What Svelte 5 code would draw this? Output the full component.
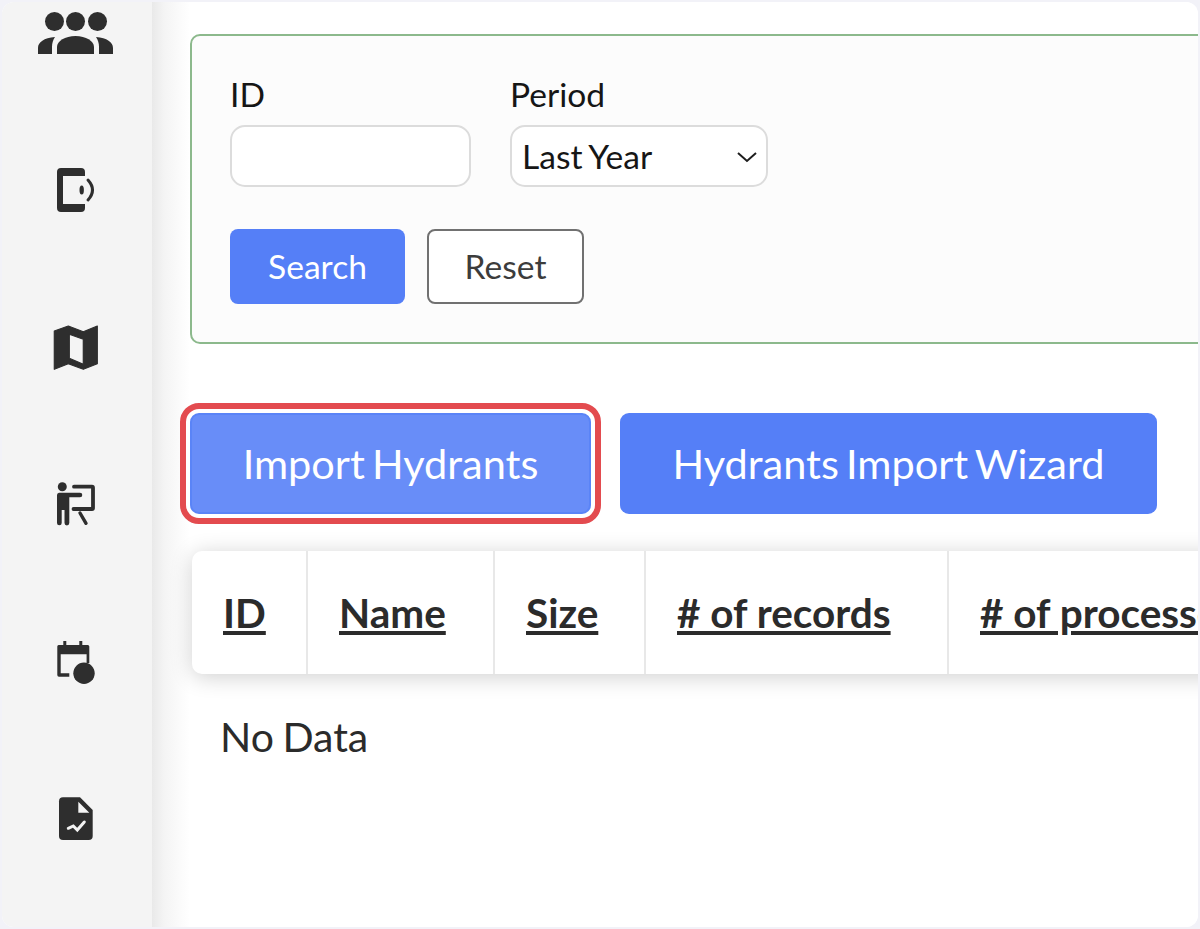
<script>
  const columns = [
    { label: 'ID', width: 115 },
    { label: 'Name', width: 187 },
    { label: 'Size', width: 151 },
    { label: '# of records', width: 303 },
    { label: '# of processed records', width: 461 }
  ];
</script>

<div class="frame">
  <aside class="sidebar">
    <svg viewBox="0 0 80 80" aria-hidden="true">
      <circle cx="18.5" cy="28.5" r="9.5" /><circle cx="39.5" cy="28.5" r="9.5" /><circle cx="61.5" cy="28.5" r="9.5" />
      <path d="M21 61v-7c0-6 8-11 18.5-11S58 48 58 54v7z" />
      <path d="M2 61v-6c0-6 6-10 17-11-2 3-3 6-3 10v7z" />
      <path d="M77 61v-6c0-6-6-10-17-11 2 3 3 6 3 10v7z" />
    </svg>
    <svg viewBox="0 0 80 80" aria-hidden="true">
      <path d="M25 18h20a4 4 0 0 1 4 4v4H27v28h22v4a4 4 0 0 1-4 4H25a4 4 0 0 1-4-4V22a4 4 0 0 1 4-4z" />
      <ellipse cx="45.7" cy="40" rx="2.200" ry="4.500" />
      <path class="line" d="M52 30q9 10 0 20" stroke-width="3" />
    </svg>
    <svg viewBox="0 0 80 80" aria-hidden="true">
      <path class="map" fill-rule="evenodd" d="M18.3 23 32.3 18 47.3 23.7 61.3 18V55.7L47.3 61.3 32.3 55.7 18.3 61.3zM33.3 26.3V50.3L47.3 56.3V31.3z" />
    </svg>
    <svg viewBox="0 0 80 80" aria-hidden="true">
      <circle cx="26.3" cy="21.7" r="4.5" />
      <path d="M23 27.7h21a2.3 2.3 0 0 1 0 4.6H33.3V58a2.3 2.3 0 0 1-4.8 0V45h-2.8v13a2.3 2.3 0 0 1-4.7 0V30a2.5 2.5 0 0 1 2-2.3z" />
      <path class="line" d="M38 21.7h18a1 1 0 0 1 1 1V43a1 1 0 0 1-1 1H37.5" stroke-width="3.8" />
      <path class="line" d="M44 48l6 10.3" stroke-width="3.4" />
    </svg>
    <svg viewBox="0 0 80 80" aria-hidden="true">
      <path d="M27.3 18h3v4h13v-4h3v4h5.5a1.5 1.5 0 0 1 1.5 1.5V40h-2.7V31.3H24.7v19h8.6v3.4H23a1.7 1.7 0 0 1-1.7-1.7V23.5A1.5 1.5 0 0 1 23 22h4.3z" />
      <circle cx="48" cy="50.3" r="10.7" />
    </svg>
    <svg viewBox="0 0 80 80" aria-hidden="true">
      <path d="M27 17.3h17L56.7 30v26a4 4 0 0 1-4 4H27a4 4 0 0 1-4-4V21.300a4 4 0 0 1 4-4z" />
      <path class="fold" d="M42.300 21.700 53.300 32.700H42.300z" />
      <path class="spark" d="M32.300 48.300 37.300 46 41.300 50 48.300 42" />
    </svg>
  </aside>

  <main class="content">
    <section class="filters">
      <div class="fields">
        <label class="field">
          <span>ID</span>
          <input class="control id-input" type="text" />
        </label>
        <label class="field">
          <span>Period</span>
          <span class="select-wrap">
            <select class="control period">
              <option>Last Year</option>
            </select>
            <svg class="chevron" viewBox="0 0 22 12" aria-hidden="true"><path d="M2 2l9 8 9-8" /></svg>
          </span>
        </label>
      </div>
      <div class="filter-actions">
        <button class="search" type="button">Search</button>
        <button class="reset" type="button">Reset</button>
      </div>
    </section>

    <div class="actions">
      <button class="big highlighted" type="button">Import Hydrants</button>
      <button class="big wizard" type="button">Hydrants Import Wizard</button>
    </div>

    <div class="table-card">
      <table>
        <colgroup>
          {#each columns as c}
            <col style="width: {c.width}px" />
          {/each}
        </colgroup>
        <thead>
          <tr>
            {#each columns as c}
              <th>{c.label}</th>
            {/each}
          </tr>
        </thead>
      </table>
    </div>

    <p class="empty">No Data</p>
  </main>
</div>

<style>
  :global(html), :global(body) {
    margin: 0;
    height: 100%;
    background: #f2f2f8;
  }

  * { box-sizing: border-box; }

  .frame {
    display: flex;
    height: 925px;
    width: 1196px;
    margin: 2px;
    border-radius: 12px;
    overflow: hidden;
    background: #fff;
    font-family: Lato, "Open Sans", sans-serif;
    color: #161616;
  }

  .sidebar {
    flex: 0 0 150px;
    display: grid;
    grid-auto-rows: 157.4px;
    justify-items: center;
    align-items: start;
    margin-top: -9px;
    background: #f4f4f4;
    height: 934px;
  }

  .sidebar svg {
    width: 80px;
    height: 80px;
    margin-left: -2px;
    fill: #2e2e2e;
  }

  .sidebar .line, .sidebar .spark {
    fill: none;
    stroke: #2e2e2e;
    stroke-linecap: round;
  }

  .sidebar .spark {
    stroke: #f4f4f4;
    stroke-width: 3;
  }

  .sidebar .map {
    stroke: #2e2e2e;
    stroke-width: 1.2;
    stroke-linejoin: round;
  }

  .sidebar .fold { fill: #f4f4f4; }

  .content {
    flex: 1;
    min-width: 0;
    padding: 32px 0 0 38px;
    background: linear-gradient(to right, #e9e9e9 0, #f4f4f4 12px, #fbfbfb 28px, #fff 38px);
  }

  .filters {
    width: 1100px;
    height: 310px;
    padding: 38px 0 0 38px;
    border: 2px solid #8cb98c;
    border-radius: 10px;
    background: #fcfcfc;
  }

  .fields {
    display: flex;
    gap: 39px;
  }

  .field {
    display: flex;
    flex-direction: column;
    font-size: 33.6px;
    word-spacing: -1.500px;
    line-height: 40px;
    gap: 11px;
  }

  .control {
    height: 62px;
    border: 2px solid #dcdcdc;
    border-radius: 15px;
    background: #fff;
    font: inherit;
    word-spacing: inherit;
    color: inherit;
    outline: none;
  }

  .id-input { width: 241px; }

  .select-wrap {
    position: relative;
    display: block;
  }

  .period {
    display: block;
    width: 257.500px;
    padding: 0 10px;
    appearance: none;
  }

  .chevron {
    position: absolute;
    right: 10px;
    top: 26px;
    width: 22px;
    height: 12px;
    fill: none;
    stroke: #1e1e1e;
    stroke-width: 2;
  }

  .filter-actions {
    display: flex;
    gap: 22px;
    margin-top: 42px;
  }

  button {
    font-family: inherit;
    cursor: pointer;
  }

  .search, .reset {
    height: 75px;
    padding-bottom: 3px;
    font-size: 33.6px;
    border-radius: 8px;
  }

  .search {
    width: 175px;
    border: 0;
    background: #557ff7;
    color: #fff;
  }

  .reset {
    width: 157px;
    border: 2px solid #717171;
    background: #fff;
    color: #3c3c3c;
  }

  .actions {
    display: flex;
    gap: 29px;
    margin-top: 69px;
  }

  .big {
    height: 101px;
    padding-bottom: 3px;
    font-size: 41.5px;
    word-spacing: -3.500px;
    border-radius: 9px;
    color: #fff;
  }

  .wizard {
    width: 537px;
    border: 0;
    background: #557ff7;
  }

  .highlighted {
    width: 401px;
    border: 2px solid #5a84f7;
    background: #688df8;
    box-shadow: 0 0 0 4px #fff;
    outline: 6px solid #e34b4f;
    outline-offset: 4px;
  }

  .table-card {
    width: 1217px;
    margin: 37px 0 0 2px;
    border-radius: 10px;
    background: #fff;
    box-shadow: 0 3px 22px rgba(0, 0, 0, 0.19);
    overflow: hidden;
  }

  table {
    table-layout: fixed;
    width: 1217px;
    border-collapse: collapse;
  }

  th {
    height: 123px;
    padding: 0 0 0 31px;
    border-right: 2px solid #e8e8e8;
    font-size: 40.5px;
    font-weight: 700;
    text-align: left;
    text-decoration: underline;
    color: #2b2b2b;
    white-space: nowrap;
    overflow: hidden;
  }

  .empty {
    margin: 38px 0 0 30px;
    font-size: 41px;
    word-spacing: -2px;
    line-height: 50px;
    color: #2b2b2b;
  }
</style>
